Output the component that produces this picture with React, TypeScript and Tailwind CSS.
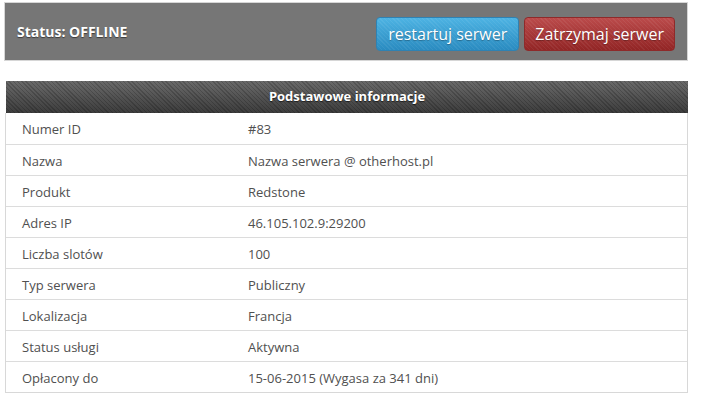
const rows: [string, string][] = [
  ["Numer ID", "#83"],
  ["Nazwa", "Nazwa serwera @ otherhost.pl"],
  ["Produkt", "Redstone"],
  ["Adres IP", "46.105.102.9:29200"],
  ["Liczba slotów", "100"],
  ["Typ serwera", "Publiczny"],
  ["Lokalizacja", "Francja"],
  ["Status usługi", "Aktywna"],
  ["Opłacony do", "15-06-2015 (Wygasa za 341 dni)"],
];

export default function App() {
  return (
    <div className="w-[719px] h-[403px] bg-white font-['Open_Sans',sans-serif] overflow-hidden pt-[2px]">
      {/* STATUS BAR */}
      <div className="ml-[4px] w-[684px] h-[59px] bg-[#767676] border border-[#d6d6d6] flex items-center justify-between pl-[12px] pr-[12px]">
        <span className="text-[14px] font-bold text-white [text-shadow:0_1px_1px_rgba(0,0,0,0.5)] -mt-[1px]">
          Status: OFFLINE
        </span>
        <div className="flex gap-[5px] mt-[4px]">
          <button className="h-[34px] px-[11px] rounded-[4px] border border-[#2f82b3] text-white text-[16px] [text-shadow:0_1px_1px_rgba(0,0,0,0.3)] bg-[repeating-linear-gradient(45deg,rgba(255,255,255,0.06)_0px,rgba(255,255,255,0.06)_1px,transparent_1px,transparent_3px),linear-gradient(#4db3e3,#2a8bc0)]">
            restartuj serwer
          </button>
          <button className="h-[34px] px-[10px] rounded-[4px] border border-[#8e2a2a] text-white text-[16px] [text-shadow:0_1px_1px_rgba(0,0,0,0.3)] bg-[repeating-linear-gradient(45deg,rgba(255,255,255,0.06)_0px,rgba(255,255,255,0.06)_1px,transparent_1px,transparent_3px),linear-gradient(#bb4b4b,#922525)]">
            Zatrzymaj serwer
          </button>
        </div>
      </div>

      {/* INFO TABLE */}
      <div className="ml-[6px] mt-[20px] w-[682px]">
        <div className="h-[32px] flex items-center justify-center text-[13px] font-bold text-white [text-shadow:0_1px_1px_rgba(0,0,0,0.6)] bg-[repeating-linear-gradient(45deg,rgba(0,0,0,0.18)_0px,rgba(0,0,0,0.18)_1px,transparent_1px,transparent_3px),linear-gradient(#6a6a6a,#3c3c3c)]">
          Podstawowe informacje
        </div>
        <div className="border border-t-0 border-[#d8d8d8] -ml-[1px]">
          {rows.map(([label, value], i) => (
            <div
              key={label}
              className={`h-[31px] pt-[3px] flex items-center text-[13px] text-[#505050] ${i > 0 ? "border-t border-[#dcdcdc]" : ""}`}
            >
              <span className="w-[242px] pl-[16px]">{label}</span>
              <span>{value}</span>
            </div>
          ))}
        </div>
      </div>
    </div>
  );
}
